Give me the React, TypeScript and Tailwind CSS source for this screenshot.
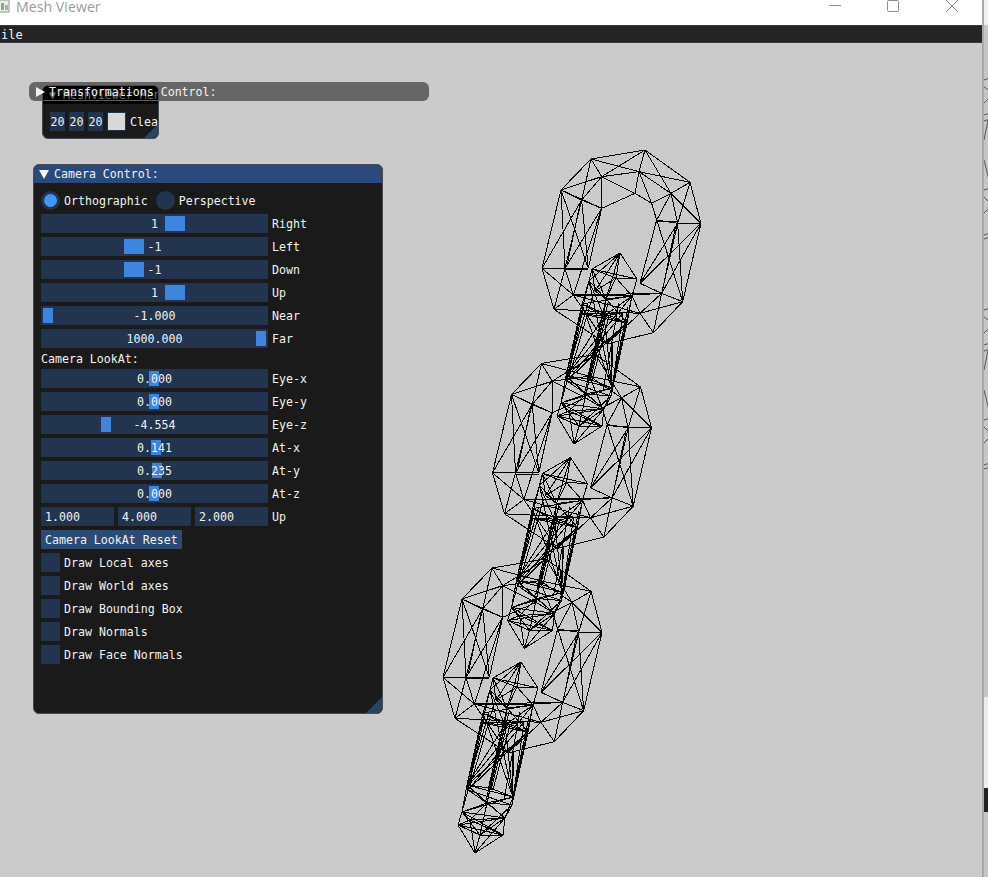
import React from "react";

type P = [number, number];
const ringV: Record<string, P> = {
  A: [345, 30], B: [183, 57], C: [93, 150], D: [36, 385], E: [72, 508], J: [230, 612], I: [370, 578], H: [458, 485], G: [513, 250], F: [480, 127],
  K: [215, 110], L: [327, 95], M: [423, 160], N: [443, 250], O: [395, 460], P: [330, 520], Q: [130, 465], R: [105, 385], S: [155, 180],
  T: [215, 205], U: [315, 160], V: [365, 190], W: [380, 240], X: [330, 430], Y: [305, 465], Z: [175, 385],
  a: [150, 192], b: [112, 372], c: [436, 262], d: [398, 448],
  e: [105, 389], f: [175, 389], g: [443, 246], h: [380, 244],
};
const ringE = "AB BC CD DE EJ JI IH HG GF FA BK AL FM GN HO IP EQ DR CS KL LM MN NO OP PQ QR RS SK BL AK AM LF FN MG GO NH HP OI DQ RE CR SD CK BS ST CT KT KU LU LV MV MW NW NX OX TU UV VW WX RZ SZ TZ TR QY OY PY QO ab cd JP JQ IO EP TQ XG WH CZ ef gh".split(" ");

// Rod with its two caps, in page coordinates of the last link
const rodV: Record<string, P> = {
  t: [521, 662], a: [493, 678], b: [538, 688], c: [517, 687], d: [490, 690], e: [533, 705], f: [507, 708],
  g: [483, 713], i: [483, 723], h: [528, 732], k: [505, 725], l: [500, 748], j: [524, 722], z: [496, 700],
  m: [467, 785], n: [513, 797], o: [468, 790], p: [512, 805], q: [487, 803], r: [490, 788],
  s: [462, 812], v: [458, 825], u: [505, 818], w: [503, 835], x: [480, 835], X: [470, 820], y: [475, 853],
  A: [510, 725], B: [493, 790], C: [507, 725], D: [491, 790], E: [503, 725], F: [488, 790], G: [514, 752], H: [512, 800], I: [513, 752],
  J: [509, 712], K: [486, 800], L: [489, 712], M: [467, 788], N: [494, 704], O: [470, 786], P: [529, 716], Q: [514, 790], R: [520, 712], S: [504, 800],
};
const rodE = "ta tb tc td tf tz ab ac cb ad az zf df dk fe be cf af ce cz dg eh fk fh gi ij ih gh gk ge ik hk ek jk gm io hn jp kq kr lr fq dm en go hp hm jo km kn AB CD EF GH IH JK LM NO PQ RS gn ho ep em dn mn op mo np mq oq qn qp rm rn rq ms nu os pu qs qu qx su sv uw vw vx xw sx ux vy wy xy sw vu uy vX Xw Xu Xq Xy sX mu ns px".split(" ");

const STEP: P = [-49.5, 204.5];
const segs: [number, number, number, number][] = [];
[0, 1, 2].forEach((k) => {
  const rx = k * STEP[0];
  const ry = k * STEP[1];
  const rp = (p: P): P => [530 + p[0] / 3 + rx, 140 + p[1] / 3 + ry];
  ringE.forEach((e) => {
    const p = rp(ringV[e[0]]);
    const q = rp(ringV[e[1]]);
    segs.push([p[0], p[1], q[0], q[1]]);
  });
  const dx = (k - 2) * STEP[0];
  const dy = (k - 2) * STEP[1];
  const op = (p: P): P => [p[0] + dx, p[1] + dy];
  rodE.forEach((e) => {
    const p = op(rodV[e[0]]);
    const q = op(rodV[e[1]]);
    segs.push([p[0], p[1], q[0], q[1]]);
  });
});

function Mesh() {
  return (
    <svg className="absolute left-0 top-0" width="982" height="834" viewBox="0 43 982 834" shapeRendering="crispEdges">
      {segs.map((s, i) => (
        <line key={i} x1={s[0]} y1={s[1]} x2={s[2]} y2={s[3]} stroke="#000" strokeWidth="1" />
      ))}
    </svg>
  );
}

function Slider({ value, grabLeft, grabWidth, label }: { value: string; grabLeft: number; grabWidth: number; label: string }) {
  return (
    <div className="flex h-[19px] items-center">
      <div className="relative flex h-[19px] w-[227px] items-center justify-center bg-[#22344e]">
        <div className="absolute top-[2px] h-[15px] bg-[#3d85e0]" style={{ left: grabLeft - 41, width: grabWidth }} />
        <span className="relative whitespace-pre pt-[2px]">{value}</span>
      </div>
      <span className="ml-1 pt-[2px]">{label}</span>
    </div>
  );
}

function Check({ label }: { label: string }) {
  return (
    <div className="flex h-[19px] items-center">
      <div className="h-[19px] w-[19px] bg-[#22344e]" />
      <span className="ml-1 pt-[2px]">{label}</span>
    </div>
  );
}

function Grip({ size }: { size: number }) {
  return (
    <svg className="absolute bottom-0 right-0" width={size} height={size} viewBox="0 0 16 16">
      <polygon points="16,0 16,16 0,16" fill="#2a4263" />
    </svg>
  );
}

export default function App() {
  return (
    <div
      className="flex h-[877px] w-[988px] overflow-hidden bg-[#cbcbcb] text-[11.6px] leading-none text-[#f2f2f2]"
      style={{ fontFamily: '"DejaVu Sans Mono", monospace' }}
    >
      <div className="flex w-[982px] flex-col">
        {/* OS title bar */}
        <div className="relative flex h-[25px] items-center bg-white" style={{ fontFamily: '"Open Sans", sans-serif' }}>
          <svg className="absolute left-0 top-0" width="11" height="13" viewBox="0 0 11 13">
            <rect x="-3" y="0" width="12" height="12" fill="#e8efe8" stroke="#8a9a94" />
            <rect x="1" y="3" width="3" height="7" fill="#7fb08a" />
            <rect x="5" y="5" width="3" height="5" fill="#c8a0a0" />
          </svg>
          <span className="mb-[10px] ml-4 text-[14.2px] text-[#9b9b9b]">Mesh Viewer</span>
          <svg className="absolute left-[825px] top-0" width="140" height="14" viewBox="0 0 140 14" fill="none" stroke="#8f8f8f">
            <line x1="4" y1="5.5" x2="16" y2="5.5" />
            <rect x="62.5" y="0.5" width="11" height="11" rx="1" />
            <line x1="121" y1="0" x2="133" y2="12" />
            <line x1="133" y1="0" x2="121" y2="12" />
          </svg>
        </div>
        {/* Menu bar */}
        <div className="flex h-[18px] items-center border-y border-[#3a3a3a] bg-[#242424] pl-[1px]">
          <span className="pt-[2px] text-[12px]">ile</span>
        </div>
        {/* Canvas */}
        <div className="relative flex-1 overflow-hidden">
          <Mesh />

          {/* Collapsed transformations window */}
          <div className="absolute left-[29px] top-[39px] h-[19px] w-[400px] rounded-[6px] bg-[#666666]" />

          {/* Small menu window */}
          <div className="absolute left-[42px] top-[42px] flex h-[54px] w-[117px] flex-col overflow-hidden rounded-[6px] border border-[#444a55] bg-[#1a1a1a]">
            <div className="relative h-[18px] shrink-0 overflow-hidden whitespace-pre bg-black pl-[6px] pt-[4px] text-[#6e6e6e]">
              ▼ MeshViewer Menu
              <div className="absolute left-0 top-[14px] h-[1px] w-full bg-[#5c5c5c]" />
            </div>
            <div className="flex items-center pl-[7px] pt-[8px]">
              <div className="flex h-[19px] w-[15px] shrink-0 items-center justify-center bg-[#22344e] pt-[2px]">20</div>
              <div className="ml-1 flex h-[19px] w-[15px] shrink-0 items-center justify-center bg-[#22344e] pt-[2px]">20</div>
              <div className="ml-1 flex h-[19px] w-[15px] shrink-0 items-center justify-center bg-[#22344e] pt-[2px]">20</div>
              <div className="ml-1 h-[19px] w-[19px] shrink-0 border border-[#22344e] bg-[#d8d8d8]" />
              <span className="ml-1 shrink-0 pt-[2px]">Clear</span>
            </div>
            <Grip size={14} />
          </div>

          {/* Label of the collapsed window, above the small window */}
          <div className="absolute left-[36px] top-[44px] flex h-[10px] items-center">
            <svg width="9" height="10" viewBox="0 0 9 10">
              <polygon points="0,0 9,5 0,10" fill="#f2f2f2" />
            </svg>
            <span className="ml-[4px] whitespace-pre pt-[2px]">Transformations Control:</span>
          </div>

          {/* Camera control window */}
          <div className="absolute left-[33px] top-[121px] h-[550px] w-[350px] overflow-hidden rounded-[6px] border border-[#4a4a52] bg-[#1a1a1a]">
            <div className="flex h-[18px] items-center bg-[#294a7a] pl-[5px]">
              <svg width="10" height="9" viewBox="0 0 10 9">
                <polygon points="0,0 10,0 5,9" fill="#f2f2f2" />
              </svg>
              <span className="ml-[5px] pt-[2px]">Camera Control:</span>
            </div>
            <div className="flex flex-col gap-1 pl-[7px] pt-[8px]">
              <div className="flex h-[19px] items-center">
                <div className="flex h-[19px] w-[19px] items-center justify-center rounded-full bg-[#22344e]">
                  <div className="h-[13px] w-[13px] rounded-full bg-[#4296fa]" />
                </div>
                <span className="ml-1 pt-[2px]">Orthographic</span>
                <div className="ml-[8px] h-[19px] w-[19px] rounded-full bg-[#22344e]" />
                <span className="ml-1 pt-[2px]">Perspective</span>
              </div>
              <Slider value="1" grabLeft={165} grabWidth={20} label="Right" />
              <Slider value="-1" grabLeft={124} grabWidth={20} label="Left" />
              <Slider value="-1" grabLeft={124} grabWidth={20} label="Down" />
              <Slider value="1" grabLeft={165} grabWidth={20} label="Up" />
              <Slider value="-1.000" grabLeft={43} grabWidth={10} label="Near" />
              <Slider value="1000.000" grabLeft={256} grabWidth={10} label="Far" />
              <div className="flex h-[13px] items-center pt-[2px]">Camera LookAt:</div>
              <Slider value="0.000" grabLeft={149} grabWidth={10} label="Eye-x" />
              <Slider value="0.000" grabLeft={149} grabWidth={10} label="Eye-y" />
              <Slider value="-4.554" grabLeft={101} grabWidth={10} label="Eye-z" />
              <Slider value="0.141" grabLeft={151} grabWidth={10} label="At-x" />
              <Slider value="0.235" grabLeft={152} grabWidth={10} label="At-y" />
              <Slider value="0.000" grabLeft={149} grabWidth={10} label="At-z" />
              <div className="flex h-[19px] items-center gap-1">
                <div className="flex h-[19px] w-[73px] items-center bg-[#22344e] pl-1 pt-[2px]">1.000</div>
                <div className="flex h-[19px] w-[73px] items-center bg-[#22344e] pl-1 pt-[2px]">4.000</div>
                <div className="flex h-[19px] w-[73px] items-center bg-[#22344e] pl-1 pt-[2px]">2.000</div>
                <span className="pt-[2px]">Up</span>
              </div>
              <div className="flex h-[19px] w-[141px] items-center bg-[#2a4c74] pl-1 pt-[2px]">Camera LookAt Reset</div>
              <Check label="Draw Local axes" />
              <Check label="Draw World axes" />
              <Check label="Draw Bounding Box" />
              <Check label="Draw Normals" />
              <Check label="Draw Face Normals" />
            </div>
            <Grip size={16} />
          </div>
        </div>
      </div>

      {/* Sliver of the window behind */}
      <div className="flex w-[6px] flex-col border-l-2 border-[#a9a9a9] bg-[#c6c6c6]">
        <div className="h-[25px] bg-[#f0f0f0]" />
        <svg className="shrink-0" width="6" height="480" viewBox="0 0 6 480" fill="none" stroke="#3a3a3a" strokeWidth="0.8">
          <path d="M0 55 L6 53 M0 62 L6 66 M0 78 L6 72 M0 90 L6 88 M0 96 L6 94 M0 115 L4 95 M0 135 L5 155 M0 165 L6 163 M0 172 L6 178 M0 188 L6 182 M0 210 L6 208 M0 214 L6 212" />
          <path d="M0 285 L6 283 M0 292 L6 296 M0 308 L6 302 M0 320 L6 318 M0 326 L6 324 M0 345 L4 325 M0 365 L5 385 M0 395 L6 393 M0 402 L6 408 M0 418 L6 412 M0 440 L6 438 M0 444 L6 442" />
        </svg>
        <div className="h-[192px]" />
        <div className="h-[91px] bg-[#ececec]" />
        <div className="h-[24px] bg-[#222222]" />
        <div className="flex-1" />
      </div>
    </div>
  );
}
